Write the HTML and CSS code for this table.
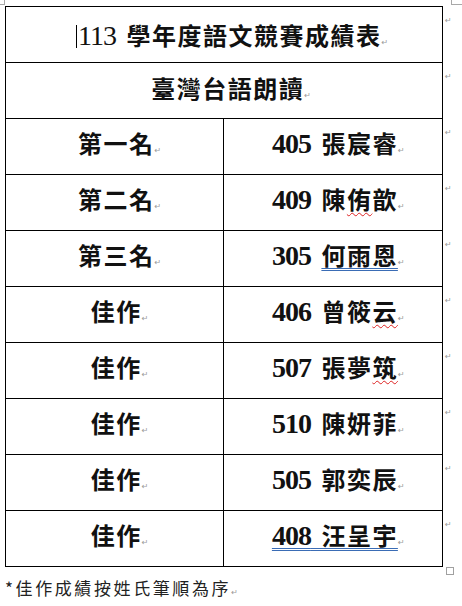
FILE: index.html
```html
<!DOCTYPE html>
<html lang="zh-Hant">
<head>
<meta charset="utf-8">
<title>113 學年度語文競賽成績表</title>
<link rel="stylesheet" href="styles.css">
</head>
<body>
<div class="page">
  <div class="marks"><span class="crop-l"></span><span class="crop-r"></span></div>
  <table class="score">
    <tr>
      <td class="cell wide title" colspan="2"><span class="caret"></span><span class="num light">113</span> 學年度語文競賽成績表<span class="pm">↵</span></td>
      <td class="rowend"><span class="pm">↵</span></td>
    </tr>
    <tr>
      <td class="cell wide" colspan="2">臺灣台語朗讀<span class="pm">↵</span></td>
      <td class="rowend"><span class="pm">↵</span></td>
    </tr>
    <tr>
      <td class="cell">第一名<span class="pm">↵</span></td>
      <td class="cell"><span class="num">405</span> 張宸睿<span class="pm">↵</span></td>
      <td class="rowend"><span class="pm">↵</span></td>
    </tr>
    <tr>
      <td class="cell">第二名<span class="pm">↵</span></td>
      <td class="cell"><span class="num">409</span> 陳<span class="spell">侑</span>歆<span class="pm">↵</span></td>
      <td class="rowend"><span class="pm">↵</span></td>
    </tr>
    <tr>
      <td class="cell">第三名<span class="pm">↵</span></td>
      <td class="cell"><span class="num">305</span> <span class="grammar">何雨恩</span><span class="pm">↵</span></td>
      <td class="rowend"><span class="pm">↵</span></td>
    </tr>
    <tr>
      <td class="cell">佳作<span class="pm">↵</span></td>
      <td class="cell"><span class="num">406</span> 曾筱<span class="spell">云</span><span class="pm">↵</span></td>
      <td class="rowend"><span class="pm">↵</span></td>
    </tr>
    <tr>
      <td class="cell">佳作<span class="pm">↵</span></td>
      <td class="cell"><span class="num">507</span> 張夢<span class="spell">筑</span><span class="pm">↵</span></td>
      <td class="rowend"><span class="pm">↵</span></td>
    </tr>
    <tr>
      <td class="cell">佳作<span class="pm">↵</span></td>
      <td class="cell"><span class="num">510</span> 陳妍菲<span class="pm">↵</span></td>
      <td class="rowend"><span class="pm">↵</span></td>
    </tr>
    <tr>
      <td class="cell">佳作<span class="pm">↵</span></td>
      <td class="cell"><span class="num">505</span> 郭奕辰<span class="pm">↵</span></td>
      <td class="rowend"><span class="pm">↵</span></td>
    </tr>
    <tr>
      <td class="cell">佳作<span class="pm">↵</span></td>
      <td class="cell"><span class="grammar"><span class="num">408</span> 汪呈宇</span><span class="pm">↵</span></td>
      <td class="rowend"><span class="pm">↵</span></td>
    </tr>
  </table>
  <div class="table-end"><span class="end-box"></span></div>
  <p class="note">*佳作成績按姓氏筆順為序<span class="pm small">↵</span></p>
</div>
</body>
</html>
```
FILE: styles.css
```css
html, body {
  margin: 0;
  padding: 0;
  background: #ffffff;
}

.page {
  width: 462px;
  height: 606px;
  overflow: hidden;
  color: #111;
}

.marks {
  display: flex;
  justify-content: space-between;
  height: 6px;
}

.crop-l {
  width: 4px;
  height: 4px;
  border-right: 1px solid #a8a8a8;
  border-bottom: 1px solid #a8a8a8;
}

.crop-r {
  width: 10px;
  height: 4px;
  border-left: 1px solid #a8a8a8;
  border-bottom: 1px solid #a8a8a8;
}

.score {
  border-collapse: collapse;
  margin-left: 5px;
  table-layout: fixed;
}

.score tr {
  height: 56px;
}

.cell {
  width: 219px;
  height: 55px;
  box-sizing: border-box;
  border: 1px solid #000;
  padding: 2px 0 0 10px;
  text-align: center;
  vertical-align: middle;
  font-family: "Liberation Serif", "Noto Sans CJK TC", serif;
  font-weight: 700;
  font-size: 24px;
  letter-spacing: 1.5px;
  word-spacing: 3px;
  line-height: 30px;
  white-space: nowrap;
  overflow: hidden;
}

.cell.wide {
  padding: 5px 0 0 14px;
}

.cell.title {
  padding: 10px 0 0 16px;
}

.num {
  font-family: "Liberation Serif", serif;
  font-size: 28px;
  font-weight: 700;
  letter-spacing: -1px;
}

.num.light {
  font-weight: 400;
}

.caret {
  display: inline-block;
  width: 0;
  height: 23px;
  border-left: 1px solid #000;
  vertical-align: -3px;
  margin-right: 1px;
}

.pm {
  font-family: "DejaVu Sans", sans-serif;
  font-size: 8px;
  font-weight: 400;
  color: #9a9a9a;
  letter-spacing: 0;
  margin-left: 0;
}

.rowend {
  width: 16px;
  padding: 6px 0 0 2px;
  vertical-align: top;
  line-height: 10px;
}

.spell {
  text-decoration: underline wavy #d22;
  text-decoration-thickness: 1px;
  text-underline-offset: 3px;
}

.grammar {
  text-decoration: underline double #3a6cb5;
  text-decoration-thickness: 1px;
  text-underline-offset: 3px;
}

.table-end {
  height: 8px;
  padding-left: 446px;
}

.end-box {
  display: block;
  width: 6px;
  height: 6px;
  border: 1px solid #a0a0a0;
}

.note {
  margin: 0;
  padding-left: 5px;
  font-family: "Noto Sans CJK TC", sans-serif;
  font-weight: 400;
  font-size: 17px;
  letter-spacing: 2.6px;
  line-height: 26px;
  color: #222;
}

.pm.small {
  font-size: 8px;
}
```
